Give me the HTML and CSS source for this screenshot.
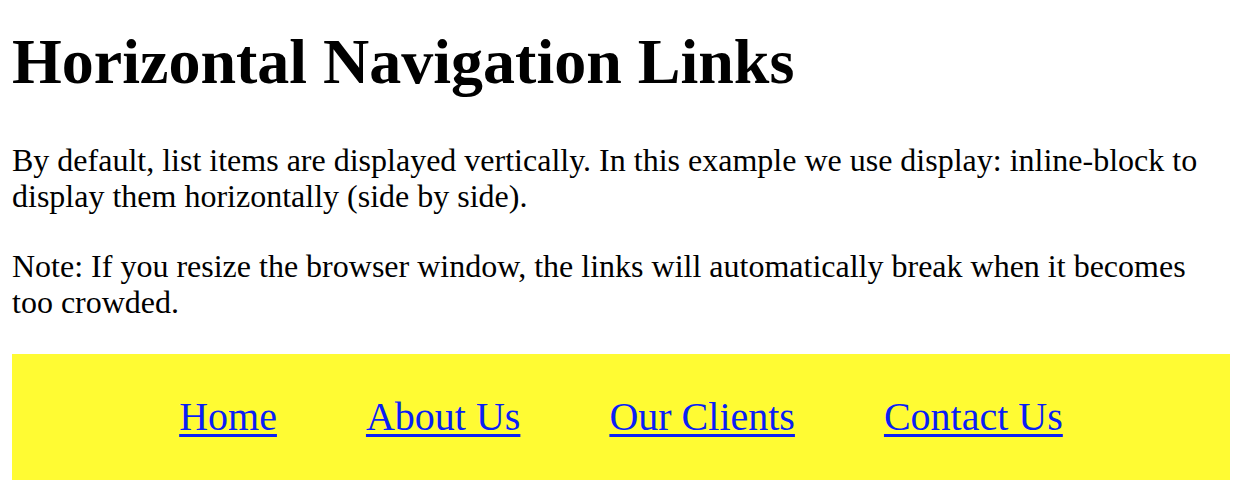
FILE: index.html
```html
<!DOCTYPE html>
<html lang="en">
<head>
<meta charset="utf-8">
<title>Horizontal Navigation Links</title>
<link rel="stylesheet" href="styles.css">
</head>
<body>
<h1 class="title">Horizontal Navigation Links</h1>
<p class="text">By default, list items are displayed vertically. In this example we use display: inline-block to display them horizontally (side by side).</p>
<p class="text">Note: If you resize the browser window, the links will automatically break when it becomes too crowded.</p>
<ul class="topnav">
  <li class="topnav-item"><a class="topnav-link" href="#home">Home</a></li>
  <li class="topnav-item"><a class="topnav-link" href="#news">About Us</a></li>
  <li class="topnav-item"><a class="topnav-link" href="#contact">Our Clients</a></li>
  <li class="topnav-item"><a class="topnav-link" href="#about">Contact Us</a></li>
</ul>
</body>
</html>
```
FILE: styles.css
```css
html, body {
  background: #ffffff;
}
body {
  margin: 0 16px 0 12px;
  font-family: "Liberation Serif", "Times New Roman", serif;
  font-size: 32px;
  line-height: 36px;
  color: #000000;
}
.title {
  margin: 0;
  padding: 25px 0 9px 0;
  font-size: 64px;
  line-height: 74px;
  font-weight: bold;
}
.text {
  margin: 34px 0 0 0;
}
.topnav {
  box-sizing: border-box;
  list-style: none;
  margin: 34px 0 0 0;
  padding: 0;
  height: 126px;
  background-color: #fffb33;
  display: flex;
  justify-content: center;
  align-items: center;
  gap: 89px;
}
.topnav-item {
  display: block;
}
.topnav-link {
  color: #0a1ff5;
  font-size: 40px;
  line-height: 46px;
  text-decoration: underline;
  text-decoration-thickness: 3px;
  text-underline-offset: 4px;
}
```
